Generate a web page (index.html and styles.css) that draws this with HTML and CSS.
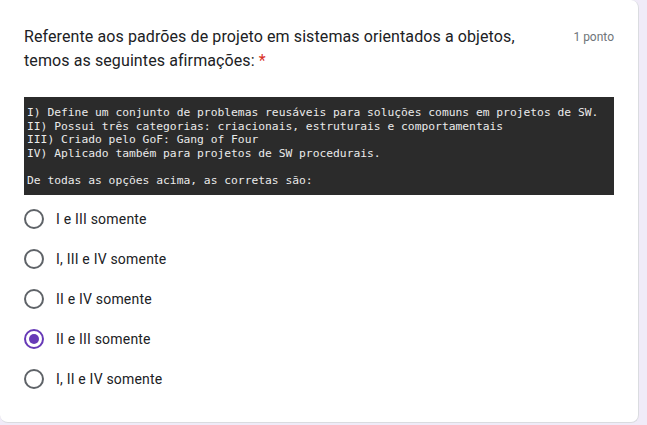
FILE: index.html
```html
<!DOCTYPE html>
<html lang="pt">
<head>
<meta charset="utf-8">
<link rel="stylesheet" href="styles.css">
</head>
<body>
<div class="card">
  <div class="header">
    <div class="title required">Referente aos padrões de projeto em sistemas orientados a objetos, temos as seguintes afirmações:</div>
    <div class="points">1 ponto</div>
  </div>
  <div class="shot"><pre>I) Define um conjunto de problemas reusáveis para soluções comuns em projetos de SW.
II) Possui três categorias: criacionais, estruturais e comportamentais
III) Criado pelo GoF: Gang of Four
IV) Aplicado também para projetos de SW procedurais.

De todas as opções acima, as corretas são:</pre></div>
  <div class="options">
    <label class="option"><span class="radio"></span><span class="label">I e III somente</span></label>
    <label class="option"><span class="radio"></span><span class="label">I, III e IV somente</span></label>
    <label class="option"><span class="radio"></span><span class="label">II e IV somente</span></label>
    <label class="option"><span class="radio checked"></span><span class="label">II e III somente</span></label>
    <label class="option"><span class="radio"></span><span class="label">I, II e IV somente</span></label>
  </div>
</div>
</body>
</html>
```
FILE: styles.css
```css
html, body {
  margin: 0;
  padding: 0;
  background: #f0ebf8;
  font-family: Roboto, "Liberation Sans", Arial, sans-serif;
  color: #202124;
}
.card {
  box-sizing: border-box;
  width: 639px;
  height: 423px;
  background: #fff;
  border: 1px solid #dadce0;
  border-top: none;
  border-left: none;
  border-radius: 0 8px 8px 8px;
  padding: 25px 24px 0 24px;
}
.header {
  display: flex;
  align-items: flex-start;
}
.title {
  flex: 1;
  font-size: 16px;
  line-height: 24px;
  letter-spacing: 0.1px;
  padding-right: 30px;
}
.required::after {
  content: "*";
  color: #d93025;
  margin-left: 4px;
}
.points {
  font-size: 12px;
  line-height: 24px;
  color: #70757a;
  white-space: nowrap;
}
.shot {
  margin-top: 24px;
  width: 590px;
  height: 98px;
  background: #2b2b2b;
  box-sizing: border-box;
  padding: 9px 0 0 3px;
}
.shot pre {
  margin: 0;
  font-family: "DejaVu Sans Mono", "Liberation Mono", monospace;
  font-size: 11.3px;
  line-height: 13.6px;
  color: #eaeaea;
}
.options {
  display: flex;
  flex-direction: column;
  margin-top: 4px;
}
.option {
  display: flex;
  align-items: center;
  height: 40px;
}
.radio {
  box-sizing: border-box;
  width: 20px;
  height: 20px;
  border: 2px solid #5f6368;
  border-radius: 50%;
  margin-right: 12px;
  display: flex;
  align-items: center;
  justify-content: center;
}
.radio.checked {
  border-color: #673ab7;
}
.radio.checked::after {
  content: "";
  width: 10px;
  height: 10px;
  border-radius: 50%;
  background: #673ab7;
}
.label {
  font-size: 14px;
  letter-spacing: 0.2px;
  color: #202124;
}
```
